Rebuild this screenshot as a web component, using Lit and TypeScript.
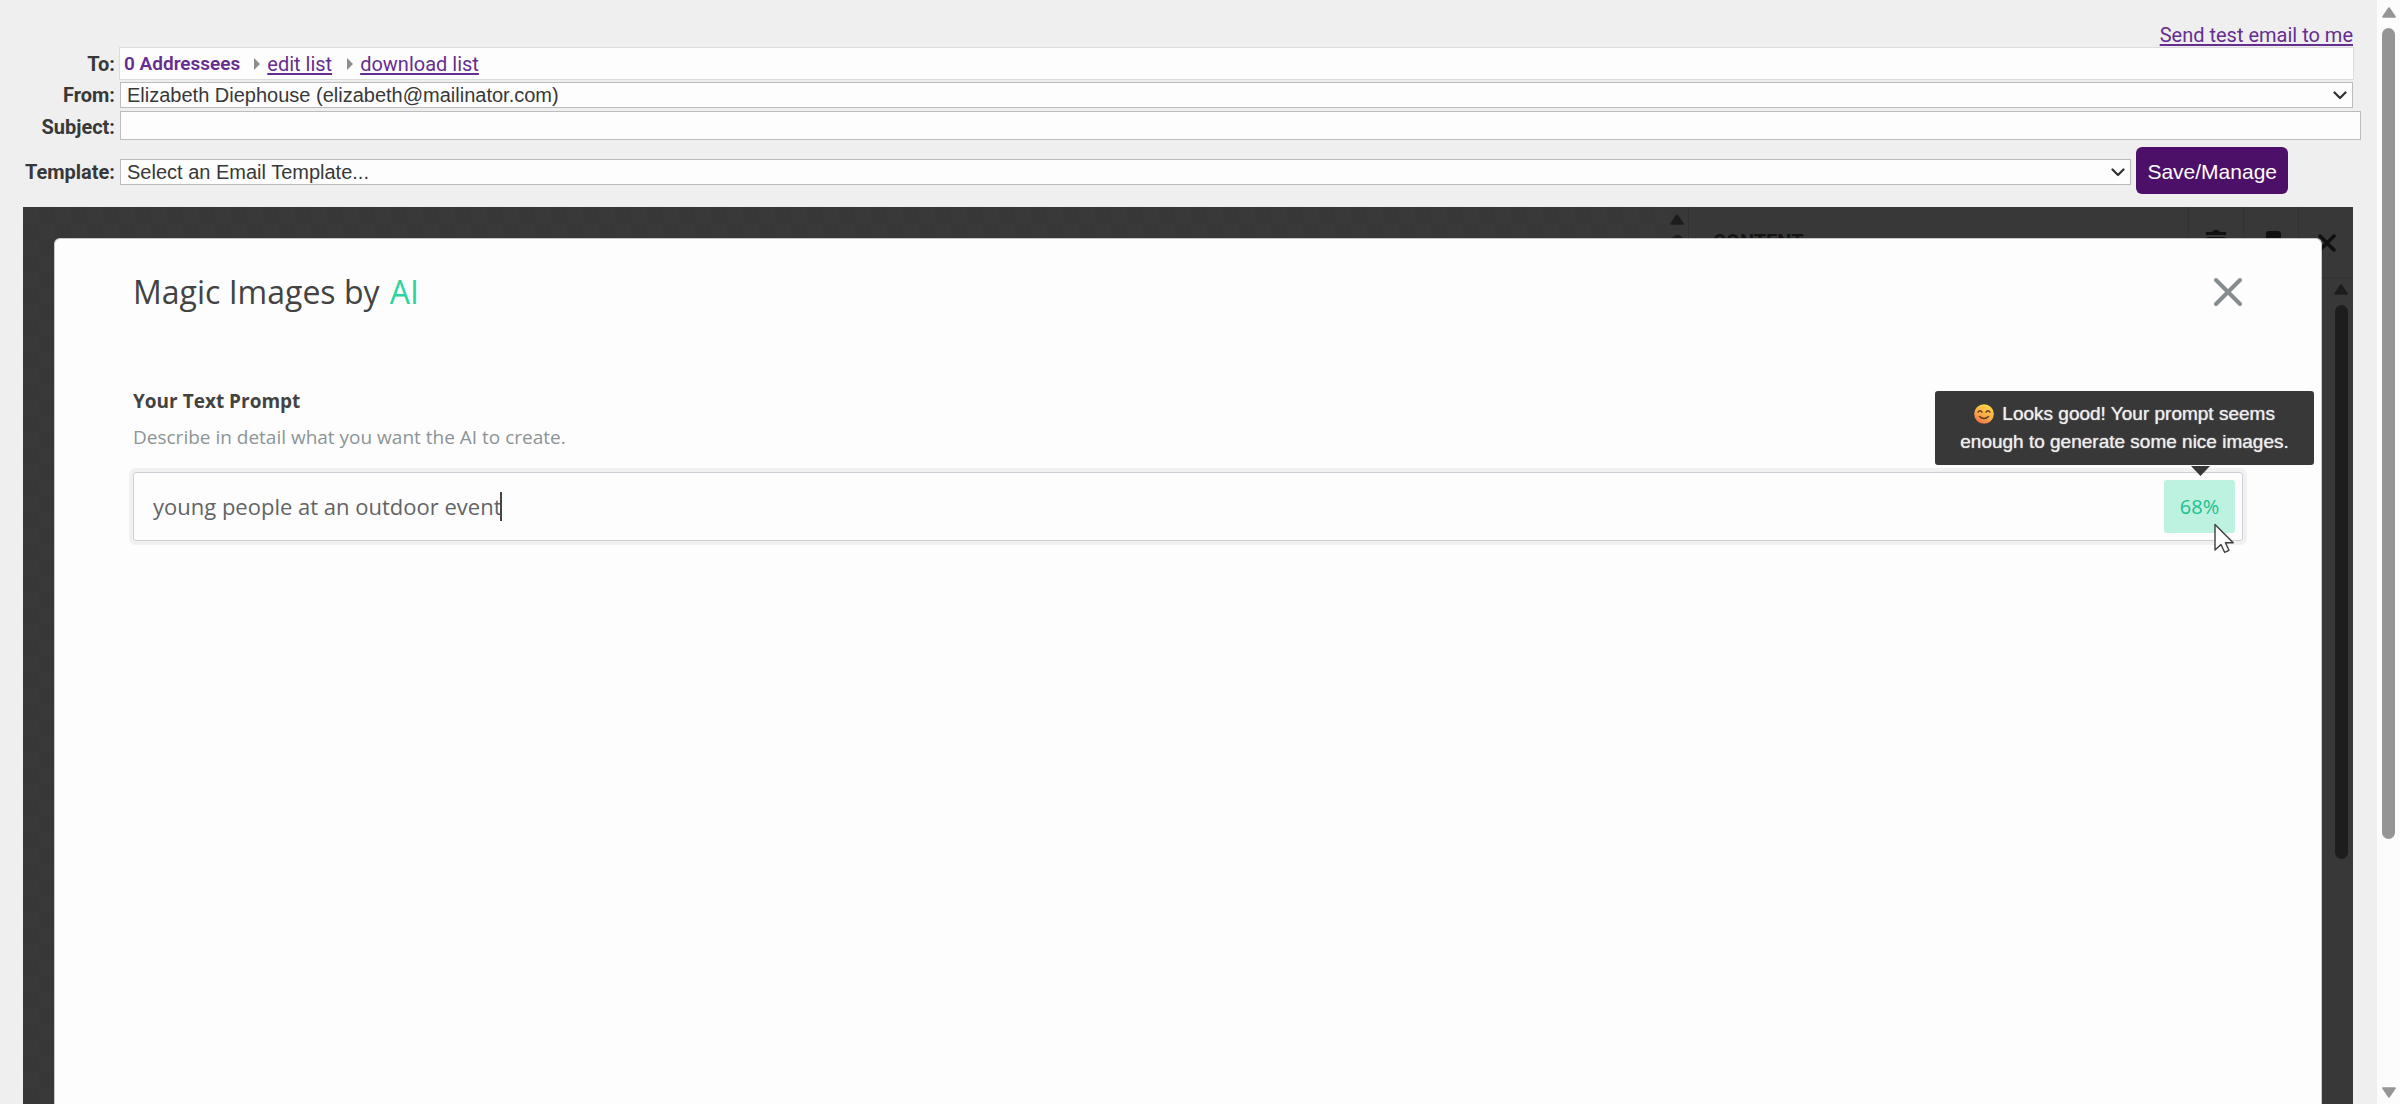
import { LitElement, html, css, svg } from "lit";
import { customElement, property, state } from "lit/decorators.js";

const chevron = html`<svg class="chevron" viewBox="0 0 14 9" aria-hidden="true">
  <path d="M1.5 1.5 7 7l5.5-5.5" fill="none" stroke="#303030" stroke-width="2.2" stroke-linecap="round" stroke-linejoin="round" />
</svg>`;

const bullet = html`<svg class="bullet" viewBox="0 0 6 12" aria-hidden="true">
  <path d="M0 0 6 6 0 12z" fill="#8d8d8d" />
</svg>`;

@customElement("scroll-rail")
export class ScrollRail extends LitElement {
  @property({ type: Boolean }) down = false;

  static styles = css`
    :host {
      display: flex;
      flex-direction: column;
      align-items: center;
      color: var(--rail-ink, #959595);
    }
    .arrow {
      width: 14px;
      height: 11px;
      flex: none;
    }
    .thumb {
      width: 13px;
      flex: none;
      height: var(--thumb-size, 74.3%);
      margin-top: 10px;
      border-radius: 7px;
      background: currentColor;
    }
    .rest {
      flex: 1;
    }
  `;

  render() {
    return html`
      <svg class="arrow" viewBox="0 0 14 11" aria-hidden="true">
        <path d="M7 1.2 12.8 9.8H1.2z" fill="currentColor" stroke="currentColor" stroke-width="2" stroke-linejoin="round" />
      </svg>
      <div class="thumb"></div>
      <div class="rest"></div>
      ${this.down
        ? html`<svg class="arrow" viewBox="0 0 14 11" aria-hidden="true">
            <path d="M7 9.8 1.2 1.2h11.6z" fill="currentColor" stroke="currentColor" stroke-width="2" stroke-linejoin="round" />
          </svg>`
        : ""}
    `;
  }
}

@customElement("magic-images-dialog")
export class MagicImagesDialog extends LitElement {
  @state() private prompt = "young people at an outdoor event";

  static styles = css`
    :host {
      display: block;
      box-sizing: border-box;
      padding: 31px 78px;
      border: 1px solid #c8c8c8;
      border-bottom: 0;
      border-radius: 6px 6px 0 0;
      background: #fdfdfd;
      color: #434343;
      font-family: "Open Sans", sans-serif;
    }
    .head {
      display: flex;
      align-items: center;
      justify-content: space-between;
      height: 44px;
    }
    h1 {
      margin: 0;
      font-size: 32px;
      line-height: 44px;
      font-weight: 400;
    }
    .accent {
      margin-left: 2px;
      color: #2bd4a1;
    }
    .close {
      display: flex;
      padding: 0;
      border: 0;
      background: none;
      color: #848c8e;
    }
    .close svg {
      width: 30px;
      height: 30px;
    }
    .label {
      display: block;
      margin-top: 73px;
      font-size: 19px;
      line-height: 28px;
      font-weight: 700;
    }
    .hint {
      margin: 8px 0 21px;
      font-size: 19px;
      line-height: 28px;
      color: #8c9496;
    }
    .field {
      position: relative;
      display: flex;
      align-items: center;
      padding: 7px;
      border: 1px solid #cdced6;
      border-radius: 3px;
      box-shadow: 0 0 0 4px #f1f1f2;
    }
    input {
      flex: 1;
      min-width: 0;
      box-sizing: border-box;
      height: 53px;
      padding: 0 12px 2px;
      border: 0;
      outline: 0;
      background: none;
      font: 22px "Open Sans", sans-serif;
      color: #626466;
    }
    .caret {
      position: absolute;
      left: 366px;
      top: 19px;
      width: 2px;
      height: 29px;
      background: #444;
    }
    .score {
      position: relative;
      display: flex;
      align-items: center;
      justify-content: center;
      width: 71px;
      height: 53px;
      border-radius: 3px;
      background: #bdf1e0;
      color: #22bf90;
      font-size: 20px;
    }
    .tip {
      position: absolute;
      right: -79px;
      bottom: 68px;
      box-sizing: border-box;
      width: 379px;
      padding: 9px 20px;
      border-radius: 3px;
      background: #383838;
      color: #ececec;
      font: 400 19px/28px "Liberation Sans", Arial, sans-serif;
      text-shadow: 0 0 1px currentColor;
      text-align: center;
    }
    .tip svg {
      width: 20px;
      height: 20px;
      margin-right: 3px;
      vertical-align: -4px;
    }
    .notch {
      position: absolute;
      left: 27px;
      top: -14px;
      width: 19px;
      height: 10px;
      background: #383838;
      clip-path: polygon(0 0, 100% 0, 50% 100%);
    }
    .pointer {
      position: absolute;
      left: 49px;
      top: 43px;
      width: 22px;
      height: 31px;
    }
  `;

  render() {
    return html`
      <div class="head">
        <h1>Magic Images by <span class="accent">AI</span></h1>
        <button class="close" aria-label="Close">
          <svg viewBox="0 0 30 30"><path d="M3 3 27 27M27 3 3 27" stroke="currentColor" stroke-width="4" stroke-linecap="round" /></svg>
        </button>
      </div>
      <label class="label" for="prompt">Your Text Prompt</label>
      <p class="hint">Describe in detail what you want the AI to create.</p>
      <div class="field">
        <input id="prompt" type="text" .value=${this.prompt}
          @input=${(e: Event) => (this.prompt = (e.target as HTMLInputElement).value)} />
        <span class="caret"></span>
        <div class="score">
          68%
          <div class="tip" role="tooltip">
            <svg viewBox="0 0 20 20" aria-hidden="true">
              <defs>
                <linearGradient id="face" x1="0.7" y1="0" x2="0.2" y2="1">
                  <stop offset="0" stop-color="#ffd64a" />
                  <stop offset="0.55" stop-color="#fbab45" />
                  <stop offset="1" stop-color="#ee6a50" />
                </linearGradient>
              </defs>
              <circle cx="10" cy="10" r="9.8" fill="url(#face)" />
              <path d="M4 8.2q2-3 4 0M12 8.2q2-3 4 0M5.500 12.500q4.500 4 9 0" fill="none" stroke="#5b3a20" stroke-width="1.4" stroke-linecap="round" />
            </svg>
            Looks good! Your prompt seems enough to generate some nice images.
          </div>
          <span class="notch"></span>
          <svg class="pointer" viewBox="0 0 22 31" aria-hidden="true">
            <path d="M2 1.5V27l6-5.5 3.6 7.8 4.4-2-3.6-7.5h7.8z" fill="#fdfdfd" stroke="#3c3c3c" stroke-width="1.4" stroke-linejoin="round" />
          </svg>
        </div>
      </div>
    `;
  }
}

@customElement("app-root")
export class AppRoot extends LitElement {
  static styles = css`
    :host {
      display: flex;
      height: 100vh;
      overflow: hidden;
      background: #efefef;
      color: #383838;
      font: 20px/26px Roboto, sans-serif;
    }
    .page {
      flex: 1;
      min-width: 0;
      display: flex;
      flex-direction: column;
      padding: 0 24px 0 23px;
    }
    .page-rail {
      width: 23px;
      box-sizing: border-box;
      padding: 7px 0 6px;
      background: #fcfcfc;
    }
    a {
      color: #662d91;
      text-decoration-thickness: 2px;
      text-underline-offset: 2px;
    }
    .test {
      display: flex;
      justify-content: flex-end;
      padding: 23px 0 0;
      line-height: 24px;
    }
    .row {
      display: flex;
      align-items: center;
      gap: 5px;
      margin-bottom: 2px;
    }
    .name {
      width: 92px;
      flex: none;
      text-align: right;
      font-weight: 700;
    }
    .to {
      flex: 1;
      display: flex;
      align-items: center;
      height: 31px;
      margin: 0 -1px;
      padding: 0 4px;
      border: 1px solid #dcdcdc;
      background: #fdfdfd;
    }
    .count {
      color: #662d91;
      font-size: 19px;
      font-weight: 600;
      margin-right: 14px;
    }
    .bullet {
      width: 6px;
      height: 12px;
      margin-right: 7px;
    }
    .edit {
      margin-right: 15px;
    }
    .pick {
      position: relative;
      flex: 1;
      min-width: 0;
      display: flex;
    }
    select,
    .subject {
      flex: 1;
      min-width: 0;
      box-sizing: border-box;
      height: 26px;
      margin: 0;
      padding: 0 6px;
      appearance: none;
      border: 1px solid #bcbcbc;
      border-radius: 0;
      background: #fdfdfd;
      color: #383838;
      font: 20px "Liberation Sans", Arial, sans-serif;
    }
    .subject {
      height: 29px;
      margin-right: -8px;
    }
    .subject-row {
      margin: 1px 0 7px;
    }
    .subject-row .name {
      padding-top: 3px;
    }
    .chevron {
      position: absolute;
      right: 6px;
      top: 9px;
      width: 14px;
      height: 9px;
    }
    .template-row {
      align-items: baseline;
      margin-bottom: 13px;
      padding-right: 65px;
    }
    .save {
      height: 47px;
      padding: 2px 11px 0;
      border: 0;
      border-radius: 6px;
      background: #4d1068;
      color: #fdfdfd;
      font: 21px "Liberation Sans", Arial, sans-serif;
    }
    .editor {
      position: relative;
      flex: 1;
      min-height: 0;
      display: flex;
      background: #383838;
      color: #141414;
    }
    .canvas {
      flex: 1;
      background: repeating-conic-gradient(#373737 0 25%, #393939 0 50%) 0 0 / 32px 32px;
    }
    .canvas-rail {
      width: 22px;
      padding-top: 7px;
      --rail-ink: #1d1d1d;
    }
    .panel {
      width: 664px;
      display: flex;
      flex-direction: column;
      border-left: 1px solid #303030;
    }
    .tools {
      display: flex;
      height: 70px;
      border-bottom: 1px solid #323232;
    }
    .heading {
      flex: 1;
      padding: 22px 0 0 24px;
      font-weight: 700;
    }
    .tool {
      display: flex;
      align-items: flex-start;
      justify-content: center;
      width: 55px;
      padding: 23px 0 0;
      border: 0;
      border-left: 1px solid #323232;
      background: none;
      color: #101010;
    }
    .tool svg {
      width: 20px;
      height: 24px;
    }
    .panel-rail {
      flex: 1;
      align-self: flex-end;
      width: 24px;
      padding-top: 6px;
      --rail-ink: #1d1d1d;
      --thumb-size: 554px;
    }
    magic-images-dialog {
      position: absolute;
      inset: 31px 31px 0 31px;
    }
  `;

  private tool(name: string, shape: unknown) {
    return html`<button class="tool" aria-label=${name}><svg viewBox="0 0 20 24">${shape}</svg></button>`;
  }

  render() {
    return html`
      <main class="page">
        <div class="test"><a href="#test">Send test email to me</a></div>
        <div class="row">
          <span class="name">To:</span>
          <div class="to">
            <span class="count">0 Addressees</span>
            ${bullet}<a class="edit" href="#edit">edit list</a>
            ${bullet}<a href="#download">download list</a>
          </div>
        </div>
        <div class="row">
          <label class="name" for="from">From:</label>
          <div class="pick">
            <select id="from"><option>Elizabeth Diephouse (elizabeth@mailinator.com)</option></select>
            ${chevron}
          </div>
        </div>
        <div class="row subject-row">
          <label class="name" for="subject">Subject:</label>
          <input class="subject" id="subject" type="text" />
        </div>
        <div class="row template-row">
          <label class="name" for="template">Template:</label>
          <div class="pick">
            <select id="template"><option>Select an Email Template...</option></select>
            ${chevron}
          </div>
          <button class="save">Save/Manage</button>
        </div>
        <section class="editor">
          <div class="canvas"></div>
          <scroll-rail class="canvas-rail"></scroll-rail>
          <div class="panel">
            <div class="tools">
              <div class="heading">CONTENT</div>
              ${this.tool("Delete", svg`<path d="M0 2h6l2-2h4l2 2h6v3H0zM1 7h18l-2 17H3z" fill="currentColor" />`)}
              ${this.tool("Duplicate", svg`<rect x="5" y="1" width="15" height="20" rx="3" fill="currentColor" />`)}
              ${this.tool("Close panel", svg`<path d="M4 6 18 20M18 6 4 20" stroke="currentColor" stroke-width="3.500" stroke-linecap="round" />`)}
            </div>
            <scroll-rail class="panel-rail"></scroll-rail>
          </div>
          <magic-images-dialog></magic-images-dialog>
        </section>
      </main>
      <scroll-rail class="page-rail" down></scroll-rail>
    `;
  }
}
